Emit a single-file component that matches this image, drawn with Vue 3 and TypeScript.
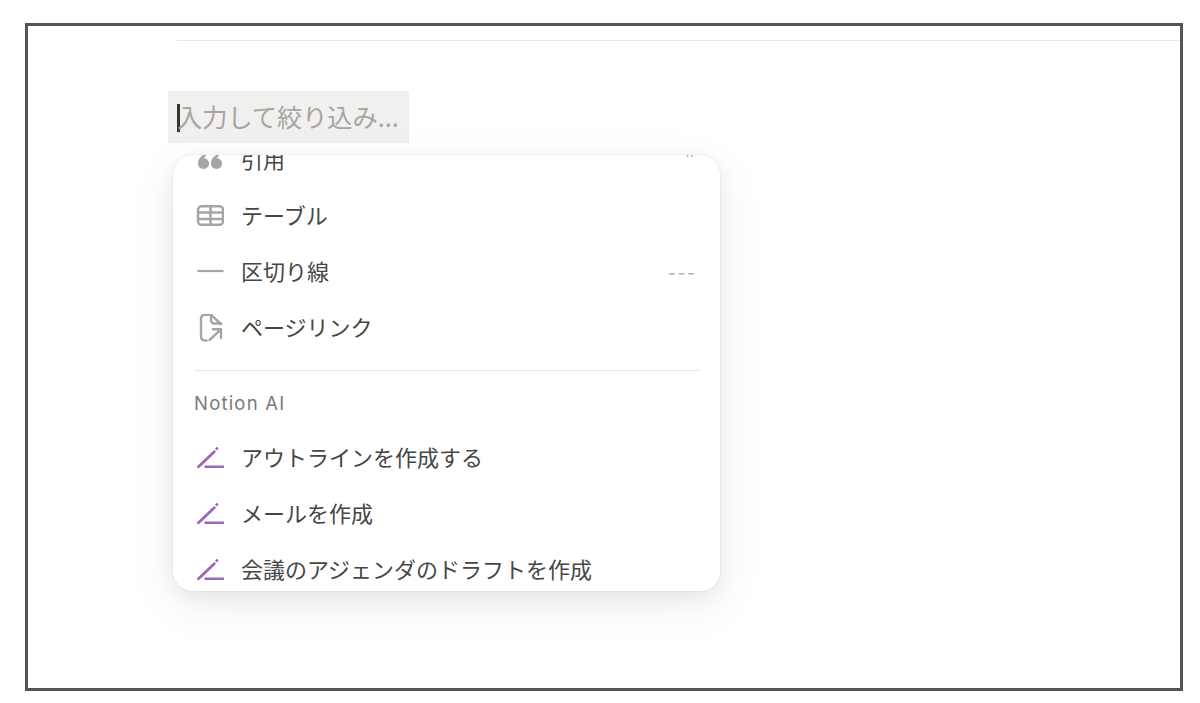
<script setup lang="ts">
type Row = { label: string; icon: string; hint?: string }

const blocks: Row[] = [
  { label: '引用', icon: 'quote', hint: '"' },
  { label: 'テーブル', icon: 'table' },
  { label: '区切り線', icon: 'divider', hint: '---' },
  { label: 'ページリンク', icon: 'pagelink' },
]

const aiRows: Row[] = [
  { label: 'アウトラインを作成する', icon: 'pen' },
  { label: 'メールを作成', icon: 'pen' },
  { label: '会議のアジェンダのドラフトを作成', icon: 'pen' },
]
</script>

<template>
  <div class="page">
    <div class="frame">
      <div class="top-rule"></div>
      <div class="editor">
        <div class="input">
          <span class="caret"></span>
          <span class="placeholder">入力して絞り込み...</span>
        </div>
      </div>
      <div class="menu">
        <div class="menu-inner">
          <div v-for="row in blocks" :key="row.label" class="row">
            <span class="icon">
              <svg v-if="row.icon === 'quote'" width="28" height="28" viewBox="0 0 28 28">
                <path d="M9.500 8C5 9.500 2 13 2 17.500a5.500 5.500 0 1 0 8.500-4.600c-1-.6-2-.7-3-.5.5-1 1.300-1.800 2.500-2.400z" fill="#a5a5a2" />
                <path d="M22.500 8C18 9.500 15 13 15 17.500a5.500 5.500 0 1 0 8.500-4.600c-1-.6-2-.7-3-.5.5-1 1.300-1.800 2.500-2.400z" fill="#a5a5a2" />
              </svg>
              <svg v-else-if="row.icon === 'table'" width="28" height="28" viewBox="0 0 28 28" fill="none" stroke="#a5a5a2" stroke-width="2.500">
                <rect x="2" y="4.300" width="25" height="18.500" rx="3.500" />
                <path d="M2 10.500H27M2 17H27M14.500 4.300V22.800" />
              </svg>
              <svg v-else-if="row.icon === 'divider'" width="28" height="28" viewBox="0 0 28 28" fill="none" stroke="#a5a5a2" stroke-width="2.200">
                <path d="M1.500 13H27.500" />
              </svg>
              <svg v-else-if="row.icon === 'pagelink'" width="28" height="28" viewBox="0 0 28 28" fill="none" stroke="#a5a5a2" stroke-width="2.400" stroke-linecap="round" stroke-linejoin="round">
                <path d="M10.500 26.500H8.500A3.500 3.500 0 0 1 5 23V4.300A3.500 3.500 0 0 1 8.500 .8H15L25 10" />
                <path d="M15 1V6.500A3 3 0 0 0 18 9.500H25" />
                <path d="M13.500 26L25 15.300M17 15.300H25V24" />
              </svg>
            </span>
            <span class="label">{{ row.label }}</span>
            <span v-if="row.hint" class="hint">{{ row.hint }}</span>
          </div>
          <div class="separator"></div>
          <div class="section-title">Notion AI</div>
          <div v-for="row in aiRows" :key="row.label" class="row">
            <span class="icon">
              <svg width="28" height="28" viewBox="0 0 28 28" fill="none" stroke="#9a68b8" stroke-linecap="round">
                <path d="M2.500 22.700L18.300 7.700" stroke-width="2.800" />
                <path d="M20.700 4.700L21 4.400" stroke-width="2.800" />
                <path d="M9.500 22.700H27" stroke-width="2.600" />
              </svg>
            </span>
            <span class="label">{{ row.label }}</span>
          </div>
        </div>
      </div>
    </div>
  </div>
</template>

<style>
html,
body {
  margin: 0;
  background: #fff;
}
</style>

<style scoped>
.page {
  width: 1200px;
  height: 703px;
  box-sizing: border-box;
  padding: 23px 17px 12px 25px;
  font-family: "Noto Sans CJK JP", "Noto Sans", sans-serif;
  overflow: hidden;
}

.frame {
  height: 100%;
  box-sizing: border-box;
  border: 3.5px solid #545454;
  overflow: hidden;
}

.top-rule {
  height: 1px;
  margin: 14px 0 0 149px;
  background: #e9e9e7;
}

.editor {
  padding: 50px 0 0 140px;
}

.input {
  width: 241px;
  height: 52px;
  box-sizing: border-box;
  padding-left: 9px;
  display: flex;
  align-items: center;
  background: #f1f0ee;
}

.caret {
  width: 3px;
  height: 28px;
  margin-top: 2px;
  background: #37352f;
  flex: none;
}

.placeholder {
  margin-left: -3px;
  margin-top: -1px;
  font-size: 25.2px;
  line-height: 1;
  color: #a5a5a2;
  white-space: nowrap;
}

.menu {
  width: 547px;
  height: 436px;
  box-sizing: border-box;
  margin: 12px 0 0 145px;
  border-radius: 20px;
  overflow: hidden;
  background: #fff;
  box-shadow: 0 0 0 1px rgba(15, 15, 15, 0.04), 0 6px 20px rgba(15, 15, 15, 0.06), 0 14px 50px rgba(15, 15, 15, 0.07);
}

.menu-inner {
  margin-top: -23px;
}

.row {
  height: 56px;
  display: flex;
  align-items: center;
  padding: 0 23px 0 23px;
}

.icon {
  width: 28px;
  height: 28px;
  flex: none;
  display: flex;
}

.label {
  margin-left: 17px;
  margin-top: -5px;
  font-size: 22px;
  line-height: 1;
  color: #464644;
  white-space: nowrap;
}

.hint {
  margin-left: auto;
  margin-top: -5px;
  font-size: 22px;
  letter-spacing: 2px;
  color: #b4b4b1;
}

.separator {
  height: 1px;
  margin: 14px 21px 0;
  background: #e6e5e3;
}

.section-title {
  height: 59px;
  box-sizing: border-box;
  padding: 19px 0 0 21px;
  font-family: Inter, "Noto Sans", sans-serif;
  font-size: 18.500px;
  letter-spacing: 1.200px;
  line-height: 26px;
  color: #7a7a77;
}
</style>
